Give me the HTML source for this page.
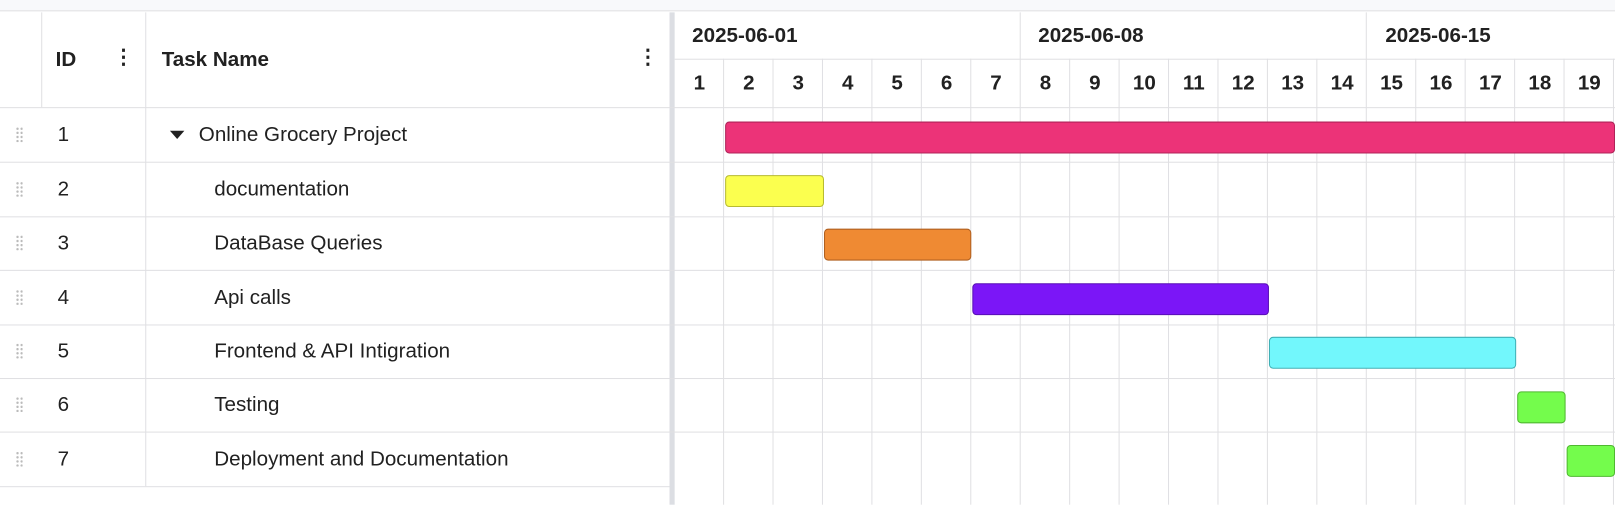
<!DOCTYPE html>
<html><head><style>
*{margin:0;padding:0;box-sizing:border-box}
body{width:1615px;height:490px;overflow:hidden;background:#fff;font-family:"Liberation Sans",sans-serif;color:#212121;position:relative}
#w{position:absolute;left:0;top:0;width:1568px;height:476px;transform:scale(1.03);transform-origin:0 0}
.a{position:absolute}
.h{background:#e0e0e3}
.t{font-size:20px;line-height:20px}
.b{font-weight:bold}
.bar{position:absolute;height:31px;border-radius:4px}
.dots{position:absolute;width:7px;height:15px;background-image:radial-gradient(circle,#bbb 1.1px,transparent 1.3px);background-size:4px 4px}
</style></head><body><div id="w">
<div class="a" style="left:0;top:0;width:1568px;height:11px;background:#f8f9fb;border-bottom:1px solid #e0e0e3"></div>
<div class="a h" style="left:40px;top:12px;width:1px;height:92px"></div>
<div class="a h" style="left:141px;top:12px;width:1px;height:460px"></div>
<div class="a" style="left:650px;top:12px;width:5px;height:478px;background:#dcdee3"></div>
<div class="a h" style="left:0;top:104px;width:1568px;height:1px"></div>
<div class="a h" style="left:0;top:157px;width:1568px;height:1px"></div>
<div class="a h" style="left:0;top:210px;width:1568px;height:1px"></div>
<div class="a h" style="left:0;top:262px;width:1568px;height:1px"></div>
<div class="a h" style="left:0;top:315px;width:1568px;height:1px"></div>
<div class="a h" style="left:0;top:367px;width:1568px;height:1px"></div>
<div class="a h" style="left:0;top:419px;width:1568px;height:1px"></div>
<div class="a h" style="left:0;top:472px;width:650px;height:1px"></div>
<div class="a h" style="left:655px;top:57px;width:913px;height:1px"></div>
<div class="a t b" style="left:54px;top:48px">ID</div>
<div class="a t b" style="left:110px;top:46px;font-size:20px;line-height:20px">⋮</div>
<div class="a t b" style="left:157px;top:48px">Task Name</div>
<div class="a t b" style="left:619px;top:46px;font-size:20px;line-height:20px">⋮</div>
<div class="dots" style="left:15px;top:123px"></div>
<div class="dots" style="left:15px;top:176px"></div>
<div class="dots" style="left:15px;top:228px"></div>
<div class="dots" style="left:15px;top:281px"></div>
<div class="dots" style="left:15px;top:333px"></div>
<div class="dots" style="left:15px;top:385px"></div>
<div class="dots" style="left:15px;top:438px"></div>
<div class="a t" style="left:56px;top:121px">1</div>
<div class="a t" style="left:56px;top:174px">2</div>
<div class="a t" style="left:56px;top:226px">3</div>
<div class="a t" style="left:56px;top:279px">4</div>
<div class="a t" style="left:56px;top:331px">5</div>
<div class="a t" style="left:56px;top:383px">6</div>
<div class="a t" style="left:56px;top:436px">7</div>
<div class="a" style="left:165px;top:127px;width:0;height:0;border-left:7px solid transparent;border-right:7px solid transparent;border-top:8px solid #212121"></div>
<div class="a t" style="left:193px;top:121px">Online Grocery Project</div>
<div class="a t" style="left:208px;top:174px">documentation</div>
<div class="a t" style="left:208px;top:226px">DataBase Queries</div>
<div class="a t" style="left:208px;top:279px">Api calls</div>
<div class="a t" style="left:208px;top:331px">Frontend &amp; API Intigration</div>
<div class="a t" style="left:208px;top:383px">Testing</div>
<div class="a t" style="left:208px;top:436px">Deployment and Documentation</div>
<div id="chart"></div>
<div class="a t b" style="left:672px;top:25px">2025-06-01</div>
<div class="a t b" style="left:1008px;top:25px">2025-06-08</div>
<div class="a t b" style="left:1345px;top:25px">2025-06-15</div>
<div class="bar" style="left:704px;top:118px;width:864px;background:#ec3378;border:1px solid #b02358"></div>
<div class="bar" style="left:704px;top:170px;width:96px;background:#fbff4f;border:1px solid #b8bb30"></div>
<div class="bar" style="left:800px;top:222px;width:143px;background:#ef8a33;border:1px solid #b06020"></div>
<div class="bar" style="left:944px;top:275px;width:288px;background:#7b16f7;border:1px solid #5810b5"></div>
<div class="bar" style="left:1232px;top:327px;width:240px;background:#72f7fc;border:1px solid #40b0b5"></div>
<div class="bar" style="left:1473px;top:380px;width:47px;background:#74fc4c;border:1px solid #4fb830"></div>
<div class="bar" style="left:1521px;top:432px;width:47px;background:#74fc4c;border:1px solid #4fb830"></div>
</div>
<script>
var c=document.getElementById('chart'),h='';
for(var i=0;i<20;i++){var x=655+48*i;
if(i>0)h+='<div class="a h" style="left:'+(x-1)+'px;top:'+((i%7==0)?12:57)+'px;width:1px;height:'+((i%7==0)?478:433)+'px"></div>';
if(i<19)h+='<div class="a t b" style="left:'+x+'px;top:71px;width:48px;text-align:center">'+(i+1)+'</div>';}
c.innerHTML=h;
</script>
</body></html>
